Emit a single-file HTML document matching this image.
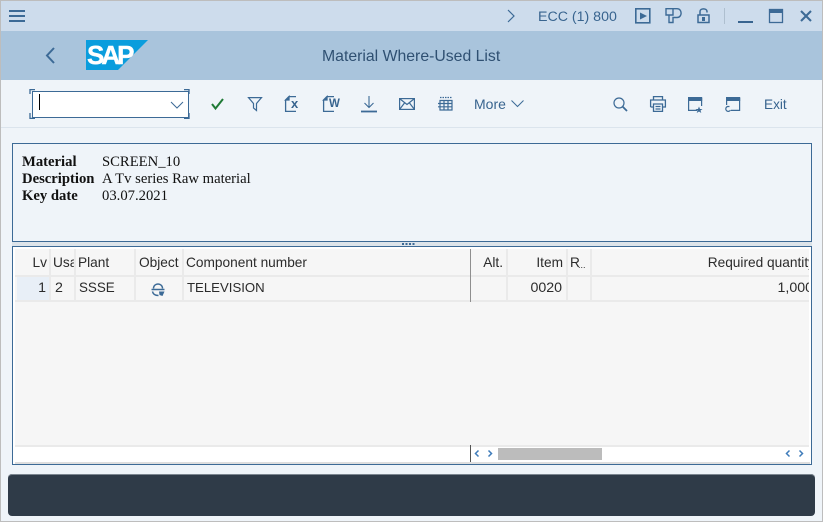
<!DOCTYPE html>
<html><head><meta charset="utf-8">
<style>
html,body{margin:0;padding:0;width:823px;height:522px;overflow:hidden;background:#eff4f9}
body{position:relative;font-family:"Liberation Sans",sans-serif;font-size:13.7px;color:#2b2b2b}
.a{position:absolute}
.t{position:absolute;white-space:nowrap;line-height:16px}
.b{color:#38648f}
.s{position:absolute;width:2px;background:#eaeaea}
svg{position:absolute;overflow:visible;fill:none;stroke:#3c6a96}
.f{font-family:"Liberation Serif",serif;font-size:14.67px;color:#111;line-height:17px}
.r{text-align:right}
.d{font-size:14.2px}
</style></head><body>
<div class="a" style="left:0;top:0;width:823px;height:1px;background:#bdbdbd"></div>
<div class="a" style="left:0;top:0;width:1px;height:522px;background:#bdbdbd"></div>
<div class="a" style="left:822px;top:0;width:1px;height:522px;background:#bdbdbd"></div>
<div class="a" style="left:0;top:521px;width:823px;height:1px;background:#bdbdbd"></div>

<div class="a" style="left:1px;top:1px;width:821px;height:30px;background:#cddcec"></div>
<div class="a" style="left:1px;top:31px;width:821px;height:49px;background:#a9c4dc"></div>
<div class="a" style="left:1px;top:127px;width:821px;height:1px;background:#dbe4ed"></div>

<svg style="left:9px;top:10px" width="16" height="12" stroke-width="2"><path d="M0 1H16M0 6H16M0 11H16"/></svg>
<svg style="left:506px;top:9px" width="10" height="14" stroke-width="1.2"><path d="M2 1L8 7L2 13"/></svg>
<div class="t b" style="left:538px;top:9px;font-size:14.2px">ECC (1) 800</div>
<svg style="left:635px;top:8px" width="16" height="16" stroke-width="1.6"><rect x=".8" y=".8" width="14" height="14"/><path d="M5 4.500L12 8L5 11.500Z" fill="#3c6a96" stroke="none"/></svg>
<svg style="left:665px;top:8px" width="17" height="15" stroke-width="1.4"><path d="M1 .7H8V7H1ZM8 .7H12C17.500 .7 17.500 9.500 12 9.500H8V14.500H4V7"/></svg>
<svg style="left:697px;top:8px" width="13" height="16" stroke-width="1.5"><path d="M3 7V3.500C3 0 10 0 10 3.500V4.500"/><rect x="1" y="7" width="11" height="7.500"/><rect x="5" y="9" width="3" height="4" fill="#3c6a96" stroke="none"/></svg>
<div class="a" style="left:724px;top:8px;width:1px;height:16px;background:#aebfcf"></div>
<div class="a" style="left:738px;top:21px;width:15px;height:2px;background:#38648f"></div>
<svg style="left:769px;top:9px" width="14" height="14" stroke-width="1.3"><rect x=".5" y=".5" width="13" height="13"/><rect x="0" y="0" width="14" height="4" fill="#3c6a96" stroke="none"/></svg>
<svg style="left:800px;top:10px" width="12" height="12" stroke-width="2.1"><path d="M1 1L11 11M11 1L1 11"/></svg>

<svg style="left:45px;top:47px" width="10" height="17" stroke-width="2"><path d="M9 1L2 8.500L9 16"/></svg>
<svg style="left:86px;top:40px;stroke:none" width="62" height="30"><path d="M0 0H62L32 30H0Z" fill="#0a9ddd"/></svg>
<div class="t" style="left:87px;top:42px;width:50px;font:bold 26px/26px 'Liberation Sans',sans-serif;letter-spacing:-3px;color:#fff;-webkit-text-stroke:.4px #fff">SAP</div>
<div class="t" style="left:322px;top:48px;font-size:15.8px;color:#2f5072;line-height:18px">Material Where-Used List</div>

<div class="a" style="left:32px;top:91px;width:155px;height:25px;background:#fff;border:1px solid #3c6a96"></div>
<svg style="left:30px;top:89px" width="160" height="30" stroke-width="1.3"><path d="M0 5V.6H5M154 .6H159V5M0 24V29.400H5M154 29.400H159V24"/></svg>
<div class="a" style="left:39px;top:94px;width:1px;height:16px;background:#000"></div>
<svg style="left:170px;top:101px" width="14" height="8" stroke-width="1"><path d="M1 1L7 7L13 1"/></svg>

<svg style="left:211px;top:98px;stroke:#1f7a36" width="13" height="12" stroke-width="2"><path d="M1 6L4.500 10.500L12 1"/></svg>
<svg style="left:248px;top:97px" width="14" height="14" stroke-width="1.2"><path d="M.5 .6H13.500L8.500 6.500V13.500L5.500 11V6.500Z"/></svg>
<svg style="left:285px;top:96px" width="16" height="16" stroke-width="1.3"><path d="M4 .6H11M4 .6L.6 4V15.400H11"/><path d="M.6 4H4V.6Z" fill="#3c6a96"/></svg>
<div class="t b" style="left:291px;top:97px;font-size:13px;font-weight:bold;line-height:14px">x</div>
<svg style="left:323px;top:96px" width="16" height="16" stroke-width="1.3"><path d="M4 .6H11M4 .6L.6 4V15.400H11"/><path d="M.6 4H4V.6Z" fill="#3c6a96"/></svg>
<div class="t b" style="left:329px;top:98px;font-size:11.500px;font-weight:bold;line-height:13px">W</div>
<svg style="left:361px;top:96px" width="16" height="17" stroke-width="1.1"><path d="M8 0V11M3.500 7L8 11.500L12.500 7"/><path d="M0 15.500H16" stroke-width="1.800"/></svg>
<svg style="left:399px;top:98px" width="16" height="12" stroke-width="1.2"><rect x=".6" y=".6" width="14.800" height="10.800"/><path d="M.6 .6L8 6.500L15.400 .6M.6 11.400L5.500 5M15.400 11.400L10.500 5"/></svg>
<svg style="left:438px;top:96px" width="15" height="15" stroke-width="1.200"><path d="M2 4.500H14V14H2ZM2 7.500H14M2 10.800H14M6 4.500V14M10 4.500V14"/><path d="M2 1.500H14M0 7.500H2M0 10.800H2" stroke-dasharray="1.500 1"/></svg>
<div class="t b" style="left:474px;top:96px;font-size:14px">More</div>
<svg style="left:511px;top:100px" width="13" height="7" stroke-width="1"><path d="M.5 .5L6.500 6.500L12.500 .5"/></svg>

<svg style="left:613px;top:97px" width="15" height="15" stroke-width="1.2"><circle cx="6" cy="6" r="5"/><path d="M9.500 9.500L14 14" stroke-width="1.800"/></svg>
<svg style="left:650px;top:96px" width="16" height="16" stroke-width="1.3"><path d="M3.500 4V.6H12.500V4M.6 11V4H15.400V11H12.500M3.500 11H.6M3.500 8H12.500V15.400H3.500ZM5.500 10.500H10.500M5.500 13H10.500"/></svg>
<svg style="left:688px;top:97px" width="15" height="15" stroke-width="1.200"><path d="M.6 1V13.400H9M13.600 1V9"/><rect x="0" y="0" width="14.200" height="4" fill="#3c6a96" stroke="none"/><path d="M11 9.500L12 12H14.500L12.500 13.500L13.300 16L11 14.500L8.700 16L9.500 13.500L7.500 12H10Z" fill="#3c6a96" stroke="none"/></svg>
<svg style="left:726px;top:97px" width="15" height="15" stroke-width="1.200"><path d="M.6 1V8M13.600 1V13.400H5"/><rect x="0" y="0" width="14.200" height="4" fill="#3c6a96" stroke="none"/><path d="M3.500 9.500H1.500A2.500 2.500 0 1 0 4.500 13"/></svg>
<div class="t b" style="left:764px;top:97px;font-size:13.6px">Exit</div>

<div class="a" style="left:12px;top:143px;width:798px;height:97px;border:1px solid #3c6a96"></div>
<div class="t f" style="left:22px;top:154px;font-weight:bold">Material</div>
<div class="t f" style="left:102px;top:154px">SCREEN_10</div>
<div class="t f" style="left:22px;top:171px;font-weight:bold">Description</div>
<div class="t f" style="left:102px;top:171px">A Tv series Raw material</div>
<div class="t f" style="left:22px;top:188px;font-weight:bold">Key date</div>
<div class="t f" style="left:102px;top:188px">03.07.2021</div>

<div class="a" style="left:12px;top:242px;width:800px;height:4px;background:#dde4ea"></div>
<div class="a" style="left:402px;top:243px;width:14px;height:2px;background:repeating-linear-gradient(90deg,#3c6a96 0 2px,transparent 2px 3.500px)"></div>

<div class="a" style="left:12px;top:246px;width:798px;height:217px;border:1px solid #3c6a96;background:#fff"></div>
<div class="a" style="left:15px;top:249px;width:794px;height:196px;background:#f6f6f6"></div>
<div class="a" style="left:15px;top:275px;width:794px;height:2px;background:#eaeaea"></div>
<div class="a" style="left:15px;top:300px;width:794px;height:2px;background:#eaeaea"></div>
<div class="a" style="left:17px;top:277px;width:32px;height:23px;background:#e8eff7"></div>
<div class="s" style="left:49px;top:249px;height:53px"></div>
<div class="s" style="left:74px;top:249px;height:53px"></div>
<div class="s" style="left:134px;top:249px;height:53px"></div>
<div class="s" style="left:182px;top:249px;height:53px"></div>
<div class="a" style="left:470px;top:249px;width:1px;height:53px;background:#8f8f8f"></div>
<div class="s" style="left:506px;top:249px;height:53px"></div>
<div class="s" style="left:566px;top:249px;height:53px"></div>
<div class="s" style="left:590px;top:249px;height:53px"></div>

<div class="t r" style="left:17px;top:255px;width:30px">Lv</div>
<div class="a" style="left:53px;top:255px;width:21px;overflow:hidden;line-height:16px;white-space:nowrap">Usa</div>
<div class="t" style="left:78px;top:255px">Plant</div>
<div class="t" style="left:139px;top:255px">Object</div>
<div class="t" style="left:186px;top:255px">Component number</div>
<div class="t r" style="left:472px;top:255px;width:31px">Alt.</div>
<div class="t r" style="left:508px;top:255px;width:55px">Item</div>
<div class="t" style="left:570px;top:255px">R</div>
<div class="t" style="left:578px;top:257px;font-size:9px">...</div>
<div class="a" style="left:592px;top:255px;width:217px;overflow:hidden;line-height:16px;white-space:nowrap"><span style="display:block;width:223px;text-align:right">Required quantity</span></div>

<div class="t r d" style="left:17px;top:280px;width:29px">1</div>
<div class="t d" style="left:55px;top:280px">2</div>
<div class="t" style="left:79px;top:280px;font-size:13.4px">SSSE</div>
<svg style="left:151px;top:282px" width="14" height="15" stroke-width="1.500"><path d="M2.500 6.500C2.500 .5 11.500 .5 11.500 6.500M.5 7.500H13.500M1.500 9.500C2 12 4 13.500 7.500 13.500"/><path d="M8 9.500H13.500L11.500 14L8.500 13Z" fill="#3c6a96" stroke="none"/></svg>
<div class="t" style="left:187px;top:280px;font-size:13.2px">TELEVISION</div>
<div class="t r d" style="left:508px;top:280px;width:54px">0020</div>
<div class="a d" style="left:592px;top:280px;width:217px;overflow:hidden;line-height:16px;white-space:nowrap"><span style="display:block;width:221px;text-align:right">1,000</span></div>

<div class="a" style="left:15px;top:445px;width:794px;height:2px;background:#eaeaea"></div>
<div class="a" style="left:470px;top:445px;width:1px;height:17px;background:#555"></div>
<div class="a" style="left:15px;top:462px;width:795px;height:2px;background:#dedede"></div>
<div class="a" style="left:498px;top:448px;width:104px;height:12px;background:#bcbcbc"></div>
<svg style="left:474px;top:450px;stroke:#3f7cba" width="6" height="7" stroke-width="1.500"><path d="M4.500 .5L1.500 3.500L4.500 6.500"/></svg>
<svg style="left:487px;top:450px;stroke:#3f7cba" width="6" height="7" stroke-width="1.500"><path d="M1.500 .5L4.500 3.500L1.500 6.500"/></svg>
<svg style="left:785px;top:450px;stroke:#3f7cba" width="6" height="7" stroke-width="1.500"><path d="M4.500 .5L1.500 3.500L4.500 6.500"/></svg>
<svg style="left:798px;top:450px;stroke:#3f7cba" width="6" height="7" stroke-width="1.500"><path d="M1.500 .5L4.500 3.500L1.500 6.500"/></svg>

<div class="a" style="left:8px;top:474px;width:807px;height:42px;background:#2f3b48;border-radius:4px;box-shadow:inset 0 1px 0 #7c8690"></div>
</body></html>
